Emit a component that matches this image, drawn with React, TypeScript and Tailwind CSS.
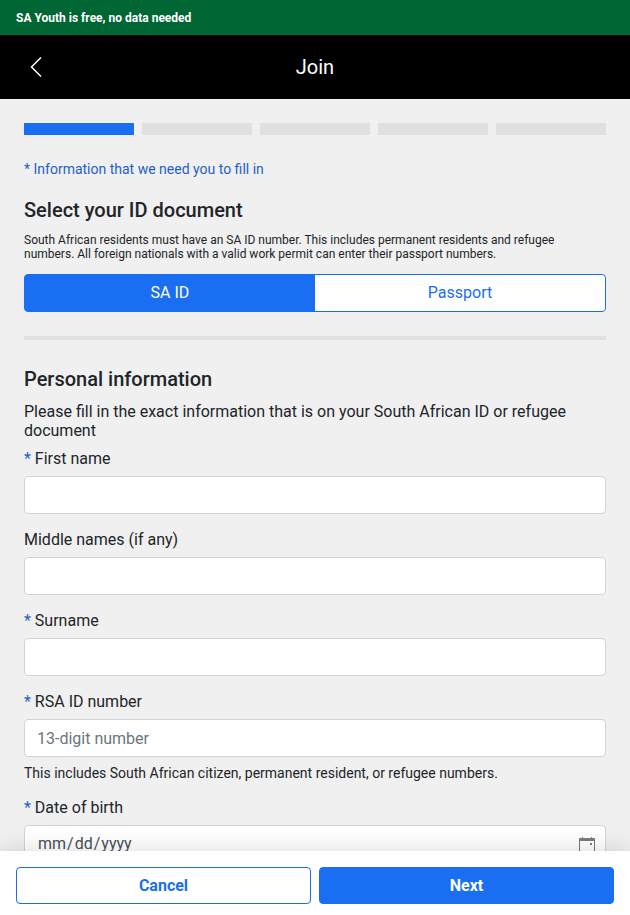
import React, { useState } from "react";

const STEPS = 5;

function CalendarIcon() {
  return (
    <svg
      viewBox="0 0 16 18"
      aria-hidden="true"
      className="pointer-events-none absolute top-3 right-[11px] h-[18px] w-4"
      fill="#7b7b7b"
    >
      <path d="M3 0h1v1h8V0h1v1h2.5l.5.5V17.5l-.5.5H.5l-.5-.5V1.500L.5 1H3zM1 4v13h14V4z" fillRule="evenodd" />
      <path d="M11 6h2v2h-2z" />
    </svg>
  );
}

function Field({
  id,
  label,
  required = false,
  type = "text",
  placeholder,
  help,
}: {
  id: string;
  label: string;
  required?: boolean;
  type?: string;
  placeholder?: string;
  help?: string;
}) {
  return (
    <div className="flex flex-col">
      <label htmlFor={id} className="mb-2 leading-[19px]">
        {required && <span className="text-[#1d5fc9]">* </span>}
        {label}
      </label>
      <div className="relative">
        <input
          id={id}
          type={type}
          required={required}
          placeholder={placeholder}
          className="block h-[38px] w-full rounded border border-[#ced4da] bg-white px-3 text-[#495057] outline-none placeholder:text-[#6c757d] focus:border-[#1a6ef2] [&::-webkit-calendar-picker-indicator]:opacity-0"
        />
        {type === "date" && <CalendarIcon />}
      </div>
      {help && <p className="mt-2 text-sm leading-[17px]">{help}</p>}
    </div>
  );
}

export default function App() {
  const [doc, setDoc] = useState<"sa" | "passport">("sa");
  const on = "bg-[#1a6ef2] text-white";
  const off = "bg-white text-[#1a6ef2]";

  return (
    <div className="flex h-screen flex-col bg-[#f0f0f0] font-[Roboto,sans-serif] text-base text-[#212529]">
      <div className="flex h-[35px] shrink-0 items-center bg-[#006634] px-4 text-xs font-bold text-white">
        <p>SA Youth is free, no data needed</p>
      </div>

      <header className="grid h-16 shrink-0 grid-cols-[1fr_auto_1fr] items-center bg-black px-6 text-white">
        <button type="button" aria-label="Back" className="flex h-6 w-6 items-center justify-center">
          <svg viewBox="0 0 24 24" className="h-6 w-6" fill="none" stroke="currentColor" strokeWidth="1.5">
            <path d="M17 2.5 7.5 12 17 21.5" />
          </svg>
        </button>
        <h1 className="text-xl leading-6">Join</h1>
      </header>

      <main className="min-h-0 flex-1 overflow-y-auto px-6 pt-6 [scrollbar-width:none]">
        <div className="grid grid-cols-5 gap-2">
          {Array.from({ length: STEPS }, (_, i) => (
            <div key={i} className={i === 0 ? "h-3 bg-[#1a6ef2]" : "h-3 bg-[#e0e0e0]"} />
          ))}
        </div>

        <p className="mt-[26px] text-sm leading-[17px] text-[#1d5fc9]">* Information that we need you to fill in</p>

        <h2 className="mt-5 text-xl leading-6 font-medium">Select your ID document</h2>
        <p className="mt-[11px] text-xs leading-[14px]">
          South African residents must have an SA ID number. This includes permanent residents and refugee numbers. All
          foreign nationals with a valid work permit can enter their passport numbers.
        </p>

        <div className="mt-[13px] grid h-[38px] grid-cols-2 overflow-hidden rounded border border-[#1a6ef2] bg-[#1a6ef2]">
          <button type="button" aria-pressed={doc === "sa"} onClick={() => setDoc("sa")} className={doc === "sa" ? on : off}>
            SA ID
          </button>
          <button
            type="button"
            aria-pressed={doc === "passport"}
            onClick={() => setDoc("passport")}
            className={doc === "passport" ? on : off}
          >
            Passport
          </button>
        </div>

        <hr className="mt-6 h-1 border-0 bg-[#e0e0e0]" />

        <h2 className="mt-[27px] text-xl leading-6 font-medium">Personal information</h2>
        <p className="mt-[11px] leading-[19px]">
          Please fill in the exact information that is on your South African ID or refugee document
        </p>

        <form className="mt-[9px] flex flex-col gap-4 pb-6">
          <Field id="first-name" label="First name" required />
          <Field id="middle-names" label="Middle names (if any)" />
          <Field id="surname" label="Surname" required />
          <Field
            id="rsa-id"
            label="RSA ID number"
            required
            placeholder="13-digit number"
            help="This includes South African citizen, permanent resident, or refugee numbers."
          />
          <Field id="dob" label="Date of birth" required type="date" />
        </form>
      </main>

      <footer className="relative z-10 grid shrink-0 grid-cols-2 gap-2 bg-white px-4 pt-4 pb-[11px] shadow-[0_0_24px_rgba(0,0,0,0.15)]">
        <button type="button" className="h-[37px] rounded border border-[#1a6ef2] bg-white font-bold text-[#1a6ef2]">
          Cancel
        </button>
        <button type="button" className="h-[37px] rounded border border-[#1a6ef2] bg-[#1a6ef2] font-bold text-white">
          Next
        </button>
      </footer>
    </div>
  );
}
